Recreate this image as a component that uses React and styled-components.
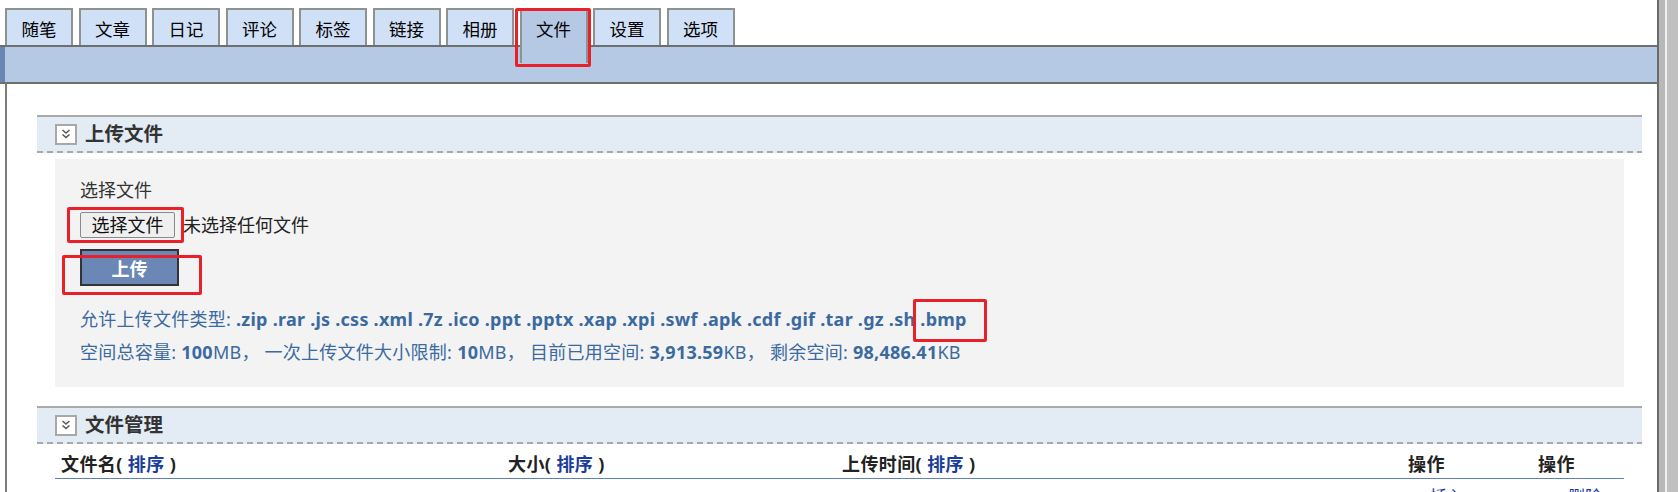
import React from 'react';
import styled, { createGlobalStyle } from 'styled-components';

const GlobalStyle = createGlobalStyle`
  html, body {
    margin: 0;
    padding: 0;
    background: #fff;
  }
  body {
    font-family: 'Noto Sans', 'Noto Sans CJK SC', sans-serif;
  }
`;

const tabs = ['随笔', '文章', '日记', '评论', '标签', '链接', '相册', '文件', '设置', '选项'];
const fileTypes =
  '.zip .rar .js .css .xml .7z .ico .ppt .pptx .xap .xpi .swf .apk .cdf .gif .tar .gz .sh .bmp';

function FoldIcon() {
  return (
    <IconBox>
      <svg width="12" height="12" viewBox="0 0 12 12">
        <polyline points="2.5,2 6,5 9.5,2" fill="none" stroke="#5a5a5a" strokeWidth="1.6" />
        <polyline points="2.5,6.5 6,9.5 9.5,6.5" fill="none" stroke="#5a5a5a" strokeWidth="1.6" />
      </svg>
    </IconBox>
  );
}

function SortHead({ label }) {
  return (
    <span>
      {label}( <SortLink>排序</SortLink> )
    </span>
  );
}

function App() {
  return (
    <Page>
      <GlobalStyle />
      <Main>
        <TabBar>
          {tabs.map((t) => (
            <Tab key={t} $active={t === '文件'}>
              {t}
            </Tab>
          ))}
        </TabBar>
        <Band />
        <Frame>
          <section>
            <SectionHeader>
              <FoldIcon />
              <SectionTitle>上传文件</SectionTitle>
            </SectionHeader>
            <Panel>
              <Label>选择文件</Label>
              <FileRow>
                <FileButton type="button">选择文件</FileButton>
                <FileStatus>未选择任何文件</FileStatus>
              </FileRow>
              <UploadButton type="button">上传</UploadButton>
              <InfoLine $first>
                允许上传文件类型: <b>{fileTypes}</b>
              </InfoLine>
              <InfoLine>
                空间总容量: <b>100</b>MB， 一次上传文件大小限制: <b>10</b>MB， 目前已用空间:{' '}
                <b>3,913.59</b>KB， 剩余空间: <b>98,486.41</b>KB
              </InfoLine>
            </Panel>
          </section>
          <Section2>
            <SectionHeader>
              <FoldIcon />
              <SectionTitle>文件管理</SectionTitle>
            </SectionHeader>
            <TableHead>
              <SortHead label="文件名" />
              <SortHead label="大小" />
              <SortHead label="上传时间" />
              <span>操作</span>
              <span>操作</span>
            </TableHead>
            <TableRow>
              <span />
              <span />
              <span />
              <RowLink $indent={22}>插入</RowLink>
              <RowLink $indent={30}>删除</RowLink>
            </TableRow>
          </Section2>
        </Frame>
      </Main>
      <SideStrip />
      <Mark $x={515} $y={8} $w={76} $h={59} />
      <Mark $x={67} $y={207} $w={117} $h={36} />
      <Mark $x={62} $y={255} $w={140} $h={40} />
      <Mark $x={913} $y={299} $w={74} $h={43} />
    </Page>
  );
}

const Page = styled.div`
  position: relative;
  display: flex;
  height: 100vh;
  overflow: hidden;
`;

const Main = styled.div`
  width: 1657px;
  display: flex;
  flex-direction: column;
`;

const TabBar = styled.nav`
  flex-shrink: 0;
  height: 45px;
  box-sizing: border-box;
  padding: 8px 0 0 5px;
  display: flex;
  align-items: flex-start;
  gap: 5.5px;
`;

const Tab = styled.div`
  position: relative;
  z-index: 1;
  width: 68px;
  height: ${(p) => (p.$active ? '55px' : '37px')};
  margin-bottom: ${(p) => (p.$active ? '-18px' : '0')};
  box-sizing: border-box;
  border: 2px solid #8f938f;
  border-bottom: none;
  background: ${(p) => (p.$active ? '#b5c9e5' : '#d0e0f7')};
  padding-top: 7px;
  text-align: center;
  font-size: 17.5px;
  line-height: 25px;
  color: #000;
`;

const Band = styled.div`
  flex-shrink: 0;
  height: 39px;
  box-sizing: border-box;
  border-top: 2px solid #6d706c;
  border-bottom: 2px solid #6d706c;
  background: linear-gradient(to right, #6a86b3 0 5px, #b5c9e5 5px);
`;

const Frame = styled.div`
  flex: 1;
  min-height: 0;
  margin-left: 5px;
  border-left: 2px solid #7d7d7d;
  padding: 31px 15px 0 30px;
`;

const SectionHeader = styled.div`
  height: 38px;
  box-sizing: border-box;
  border-top: 2px solid #a9a9a9;
  background: repeating-linear-gradient(to right, #a9a9a9 0 6px, transparent 6px 10px) bottom / 100% 2px
      no-repeat,
    #e3ebf5;
  display: flex;
  align-items: center;
  padding: 0 0 2px 18px;
  gap: 8px;
`;

const IconBox = styled.span`
  width: 22px;
  height: 21px;
  box-sizing: border-box;
  border: 2px solid #a8a8a8;
  background: #fff;
  display: flex;
  align-items: center;
  justify-content: center;
`;

const SectionTitle = styled.h2`
  margin: 0;
  font-size: 19.5px;
  line-height: 26px;
  font-weight: 700;
  color: #333;
`;

const Panel = styled.div`
  margin: 6px 18px 0;
  background: #f3f3f3;
  padding: 19px 25px 18px;
`;

const Label = styled.div`
  font-size: 18px;
  line-height: 24px;
  color: #333;
`;

const FileRow = styled.div`
  margin-top: 10px;
  display: flex;
  align-items: center;
  height: 26px;
`;

const FileButton = styled.button`
  width: 95px;
  height: 26px;
  box-sizing: border-box;
  border: 1px solid #8a8a8a;
  border-radius: 2px;
  background: #efefef;
  padding: 0;
  font-family: inherit;
  font-size: 18px;
  line-height: 22px;
  color: #111;
`;

const FileStatus = styled.span`
  margin-left: 8px;
  font-size: 18px;
  line-height: 24px;
  color: #222;
`;

const UploadButton = styled.button`
  display: block;
  margin-top: 11px;
  width: 99px;
  height: 37px;
  box-sizing: border-box;
  border: 2px solid #333;
  background: #6a87b5;
  color: #fff;
  font-family: inherit;
  font-size: 18px;
  font-weight: 700;
  padding: 0;
`;

const InfoLine = styled.div`
  margin-top: ${(p) => (p.$first ? '17px' : '0')};
  font-size: 18px;
  line-height: 33px;
  letter-spacing: 0.25px;
  color: #3a6aa0;
  white-space: nowrap;
  b {
    font-weight: 700;
  }
`;

const Section2 = styled.section`
  margin-top: 19px;
`;

const TableHead = styled.div`
  margin: 6px 18px 0;
  height: 29px;
  box-sizing: border-box;
  padding: 0 0 3px 6px;
  display: grid;
  grid-template-columns: 447px 334px 566px 130px 1fr;
  align-items: center;
  border-bottom: 1px solid #5f7fb8;
  font-size: 18px;
  letter-spacing: 0.4px;
  font-weight: 700;
  color: #222;
  white-space: nowrap;
`;

const SortLink = styled.span`
  color: #1b3d99;
`;

const TableRow = styled.div`
  margin: 0 18px;
  padding: 5px 0 0 6px;
  display: grid;
  grid-template-columns: 447px 334px 566px 130px 1fr;
  font-size: 17px;
  line-height: 25px;
`;

const RowLink = styled.span`
  padding-left: ${(p) => p.$indent}px;
  color: #1b3d99;
`;

const SideStrip = styled.div`
  width: 21px;
  flex-shrink: 0;
  background: linear-gradient(
    to right,
    #6b6b6b 0 2px,
    #b8b8b8 2px 8px,
    #f0f0f0 8px 10px,
    #c0c0c0 10px
  );
`;

const Mark = styled.div`
  position: absolute;
  left: ${(p) => p.$x}px;
  top: ${(p) => p.$y}px;
  width: ${(p) => p.$w}px;
  height: ${(p) => p.$h}px;
  box-sizing: border-box;
  border: 3px solid #e8202a;
  border-radius: 2px;
  pointer-events: none;
  z-index: 5;
`;

export default App;
